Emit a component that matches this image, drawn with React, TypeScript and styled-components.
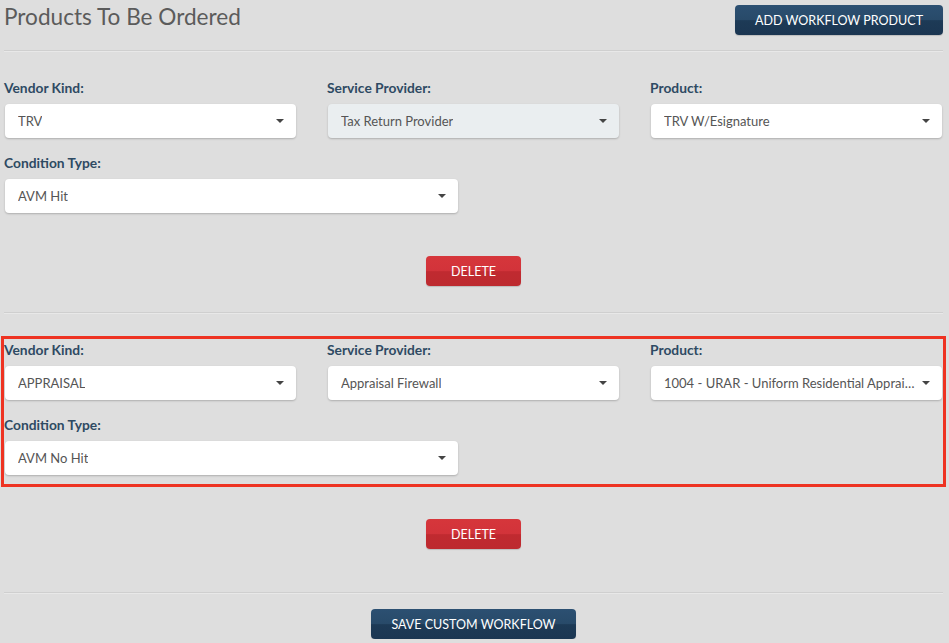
import React from 'react';
import styled, {createGlobalStyle, css} from 'styled-components';

const GlobalStyle = createGlobalStyle`
    html, body {
        margin: 0;
        padding: 0;
        background: #dedede;
    }
    body {
        font-family: Lato, "Open Sans", sans-serif;
        color: #555;
    }
`;

type Row = {
    vendorKind: string,
    provider: string,
    providerDisabled?: boolean,
    product: string,
    condition: string,
    highlighted?: boolean
}

const rows: Row[] = [
    {vendorKind: 'TRV', provider: 'Tax Return Provider', providerDisabled: true, product: 'TRV W/Esignature', condition: 'AVM Hit'},
    {vendorKind: 'APPRAISAL', provider: 'Appraisal Firewall', product: '1004 - URAR - Uniform Residential Appraisal Report', condition: 'AVM No Hit', highlighted: true}
];

const Caret = () => (
    <svg width="8" height="4" viewBox="0 0 8 4">
        <path d="M0 0h8L4 4z" fill="#444" />
    </svg>
);

const SelectBox: React.FC<{value: string, disabled?: boolean}> = ({value, disabled}) => (
    <Select disabled={disabled}>
        <SelectText>{value}</SelectText>
        <Caret />
    </Select>
);

const App: React.FC = () => {
    return (
        <>
            <GlobalStyle />
            <Page>
                <Header>
                    <Title>Products To Be Ordered</Title>
                    <Button>Add Workflow Product</Button>
                </Header>
                <Divider />
                {
                    rows.map((r, i) => (
                        <React.Fragment key={i}>
                            <Block highlighted={r.highlighted}>
                                <Grid>
                                    <Field>
                                        <Label>Vendor Kind:</Label>
                                        <SelectBox value={r.vendorKind} />
                                    </Field>
                                    <Field>
                                        <Label>Service Provider:</Label>
                                        <SelectBox value={r.provider} disabled={r.providerDisabled} />
                                    </Field>
                                    <Field>
                                        <Label>Product:</Label>
                                        <SelectBox value={r.product} />
                                    </Field>
                                </Grid>
                                <HalfField>
                                    <Label>Condition Type:</Label>
                                    <SelectBox value={r.condition} />
                                </HalfField>
                            </Block>
                            <Actions last={i === rows.length - 1}>
                                <Button danger>Delete</Button>
                            </Actions>
                            <Divider />
                        </React.Fragment>
                    ))
                }
                <Footer>
                    <Button wide>Save Custom Workflow</Button>
                </Footer>
            </Page>
        </>
    );
};

const Page = styled.div`
    width: 939px;
    padding: 0 0 0 4px;
`;

const Header = styled.div`
    display: flex;
    justify-content: space-between;
    align-items: flex-start;
    padding-top: 5px;
    height: 45px;
`;

const Title = styled.h1`
    margin: 0;
    margin-top: -2px;
    font-size: 22.6px;
    font-weight: 400;
    color: #5b5b5b;
    line-height: 28px;
`;

const Divider = styled.hr`
    margin: 0;
    border: 0;
    height: 1px;
    background: #cfcfcf;
    box-shadow: 0 1px 0 #e8e8e8;
`;

const Block = styled.div<{highlighted?: boolean}>`
    padding-top: 28px;
    ${props => props.highlighted && css`
        margin-top: 26px;
        padding: 2px 0 9px;
        outline: 3px solid #ee3322;
    `}
`;

const Grid = styled.div`
    display: grid;
    grid-template-columns: repeat(3, 292px);
    column-gap: 31px;
`;

const Field = styled.div`
    display: flex;
    flex-direction: column;
`;

const HalfField = styled(Field)`
    width: 454px;
    margin-top: 16px;
`;

const Label = styled.label`
    font-size: 13.8px;
    font-weight: 700;
    color: #2e4a63;
    line-height: 18px;
    margin-bottom: 7px;
`;

const Select = styled.div<{disabled?: boolean}>`
    display: flex;
    align-items: center;
    justify-content: space-between;
    height: 34px;
    box-sizing: border-box;
    margin-left: 1px;
    padding: 0 12px 0 13px;
    background: ${props => props.disabled ? '#eaeef0' : '#fff'};
    border-radius: 4px;
    box-shadow: 0 1px 2px rgba(0, 0, 0, .22);
    font-size: 13px;
    color: #555;
    svg {
        flex-shrink: 0;
        margin-left: 4px;
    }
`;

const SelectText = styled.span`
    white-space: nowrap;
    overflow: hidden;
    text-overflow: ellipsis;
`;

const Actions = styled.div<{last?: boolean}>`
    display: flex;
    justify-content: center;
    padding: ${props => props.last ? '35px 0 43px' : '43px 0 26px'};
`;

const Footer = styled.div`
    display: flex;
    justify-content: center;
    padding-top: 16px;
`;

const Button = styled.button<{danger?: boolean, wide?: boolean}>`
    height: 30px;
    min-width: ${props => props.danger ? '95px' : props.wide ? '205px' : '208px'};
    padding: 0 14px;
    border: 0;
    border-radius: 4px;
    font-family: inherit;
    font-size: 12.5px;
    text-transform: uppercase;
    color: #fff;
    cursor: pointer;
    background: ${props => props.danger
        ? 'linear-gradient(to bottom, #d6363b 0%, #d2333a 50%, #c02a30 52%, #bd2a2f 100%)'
        : 'linear-gradient(to bottom, #2c5072 0%, #284a69 50%, #1d3a56 52%, #1b3652 100%)'};
    box-shadow: 0 1px 1px rgba(0, 0, 0, .15);
`;

export default App;
